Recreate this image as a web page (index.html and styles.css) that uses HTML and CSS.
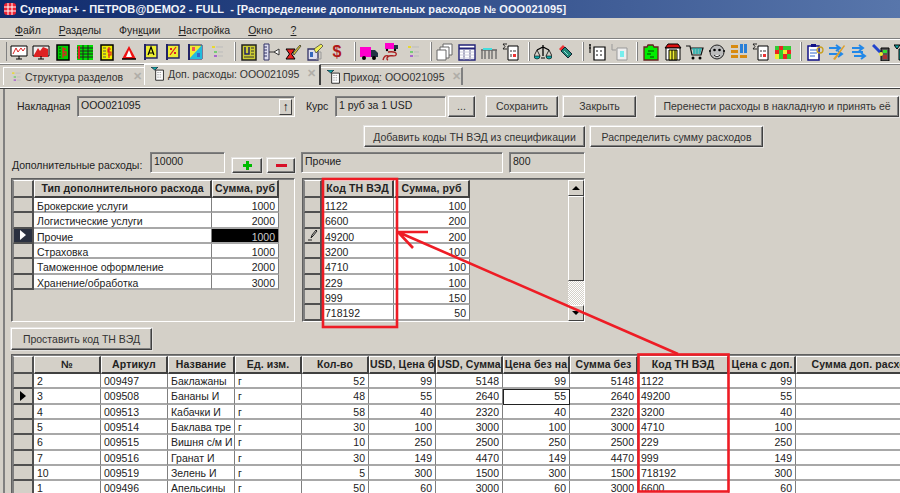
FILE: index.html
```html
<!doctype html>
<html>
    <head>
        <title>Супермаг+</title>
        <link rel="stylesheet" href="styles.css">
    </head>
    <body>
        <svg class="defs">
            <symbol id="tree" viewBox="0 0 18 18">
                <path d="M4 3h3v2H4z" fill="#e8d830"/><path d="M8 4h7" stroke="#bbb"/><path d="M6 8h3v2H6z" fill="#7c7"/><path d="M10 9h5" stroke="#bbb"/><path d="M6 12h3v2H6z" fill="#a6c"/><path d="M10 13h5" stroke="#bbb"/>
            </symbol>
            <symbol id="sumdoc" viewBox="0 0 18 18">
                <path d="M6 3h10v14H6z" fill="#fff" stroke="#000"/><path d="M5 1H1l2 2.500L1 6h4" fill="none" stroke="#000" stroke-width=".8"/><path d="M8 7h2v2H8zM11 7h3v2h-3zM8 11h2v3H8z" fill="#999"/><path d="M11 11h3v3h-3z" fill="#e33"/>
            </symbol>
        </svg>

        <div class="titlebar">
            <svg class="applogo" viewBox="0 0 14 14"><rect x="1" y="1" width="12" height="12" rx="3" fill="#e23"/><path d="M1 5h12M1 9h12M5 1v12M9 1v12" stroke="#fff"/></svg>
            <span>Супермаг+ - ПЕТРОВ@DEMO2 - FULL  - [Распределение дополнительных расходов № ООО021095]</span>
        </div>

        <div class="menubar">
            <span><u>Ф</u>айл</span>
            <span><u>Р</u>азделы</span>
            <span>Фун<u>к</u>ции</span>
            <span><u>Н</u>астройка</span>
            <span><u>О</u>кно</span>
            <span><u>?</u></span>
        </div>

        <div class="toolbar">
            <i class="grip"></i>
            <svg class="ico" viewBox="0 0 18 18"><path d="M1 3h16v10H1z" fill="#fff" stroke="#000"/><path d="M3 11l3-6 2 4 3-4 2 3 2-3" fill="none" stroke="#d22"/><path d="M9 13v3M6 16h6" stroke="#000"/></svg>
            <svg class="ico" viewBox="0 0 18 18"><path d="M1 3h16v10H1z" fill="#eee" stroke="#000"/><path d="M2 12l4-7 2 3 3-4 5 2v8H2z" fill="#d22"/><path d="M9 13v3M6 16h6" stroke="#000"/></svg>
            <svg class="ico" viewBox="0 0 18 18"><path d="M3 2h12v15H3z" fill="#0c0" stroke="#000" stroke-width="1.500"/><path d="M5 5h2M5 8h2M5 11h2M5 14h2" stroke="#040"/><path d="M9 4v11M12 6H9.500v3H12v3H9" fill="none" stroke="#d22" stroke-width="1.300"/></svg>
            <svg class="ico" viewBox="0 0 18 18"><path d="M1 2h16v15H1z" fill="#0d0"/><path d="M1 5h16M1 8h16M1 11h16M1 14h16M7 2v15M12 2v15" stroke="#222"/><path d="M3 3v13" stroke="#d22" stroke-width="2"/></svg>
            <svg class="ico" viewBox="0 0 18 18"><path d="M3 2h12v15H3z" fill="#ee0" stroke="#000" stroke-width="1.500"/><path d="M5 5h3M5 8h3M5 11h3M5 14h3" stroke="#555"/><path d="M11 4v11M13 6h-3v3h3v3h-3" fill="none" stroke="#d22" stroke-width="1.200"/></svg>
            <svg class="ico" viewBox="0 0 18 18"><path d="M9 3l7 13H2z" fill="#e11"/><path d="M9 7l3 7H6z" fill="#fff"/><path d="M2 16h14" stroke="#000" stroke-width="1.500"/></svg>
            <svg class="ico" viewBox="0 0 18 18"><path d="M3 2h12v13H3z" fill="#ee3" stroke="#226" stroke-width="1.500"/><path d="M3 1v16" stroke="#226" stroke-width="2"/><path d="M6 12l3-8 3 8M7 10h4" fill="none" stroke="#000" stroke-width="1.200"/></svg>
            <svg class="ico" viewBox="0 0 18 18"><path d="M3 2h12v13H3z" fill="#ee3" stroke="#226" stroke-width="1.500"/><path d="M3 1v16" stroke="#226" stroke-width="2"/><path d="M6 12l6-8" stroke="#d22" stroke-width="1.200"/><path d="M6 5h2v2H6zM10 9h2v2h-2z" fill="#d22"/></svg>
            <svg class="ico" viewBox="0 0 18 18"><path d="M3 2h13v14H3z" fill="#ee3" stroke="#226"/><path d="M3 16L16 2v14z" fill="#2bd"/><path d="M3 1v16" stroke="#226" stroke-width="2"/><path d="M6 4h3v4H6z" fill="#e55"/><path d="M11 10h3v4h-3z" fill="#36c"/></svg>
            <svg class="ico"><use href="#tree"/></svg>
            <i class="sep"></i>
            <svg class="ico" viewBox="0 0 18 18"><path d="M2 2h14v15H2z" fill="#cc3" stroke="#222" stroke-width="1.500"/><path d="M5 4v7h4V4" fill="none" stroke="#226" stroke-width="1.500"/><path d="M11 5h3M11 8h3M11 11h3M4 14h10" stroke="#333"/></svg>
            <svg class="ico" viewBox="0 0 18 18"><path d="M2 1h5v16H2z" fill="#dde" stroke="#336"/><path d="M2 4h3M2 7h3M2 10h3M2 13h3" stroke="#336"/><path d="M7 9h5" stroke="#333"/><path d="M12 9l5-3v6z" fill="#fff" stroke="#333"/></svg>
            <svg class="ico" viewBox="0 0 18 18"><path d="M2 6h9L7.500 11l3.500 5H2l3.500-5z" fill="#e22" stroke="#000"/><path d="M9 10l7-8 1 1-7 9z" fill="#dc3" stroke="#222" stroke-width=".7"/></svg>
            <svg class="ico" viewBox="0 0 18 18"><path d="M2 6h10v11H2z" fill="#dde" stroke="#336" stroke-width="1.300"/><path d="M4 9h3v5H4z" fill="#36b"/><path d="M8 6l7-5 2 2-7 7z" fill="#ee5" stroke="#333" stroke-width=".7"/><path d="M12 9h3v7h-5" fill="none" stroke="#999"/></svg>
            <span class="ico dollar">$</span>
            <i class="sep"></i>
            <svg class="ico" viewBox="0 0 18 18"><path d="M0 4h11v10H0z" fill="#f0c"/><path d="M11 7h4l3 3v4h-7z" fill="#234"/><circle cx="4" cy="15" r="2" fill="#000"/><circle cx="14" cy="15" r="2" fill="#000"/></svg>
            <svg class="ico" viewBox="0 0 18 18"><path d="M3 0h9v6H3z" fill="#f0c"/><path d="M12 2h4v4h-4z" fill="#234"/><circle cx="5" cy="7" r="1.200"/><circle cx="13" cy="7" r="1.200"/><path d="M6 9c7-1 9 1 8 3s-5 0-7 1-3 3-1 4M1 17c1-4 3-5 5-4" fill="none" stroke="#a22" stroke-width="1.400"/></svg>
            <svg class="ico"><use href="#tree"/></svg>
            <i class="sep"></i>
            <svg class="ico" viewBox="0 0 18 18"><path d="M7 1h9v11H7z" fill="#fff" stroke="#666"/><path d="M4 4h9v11H4z" fill="#fff" stroke="#666"/><path d="M1 7h9v10H1z" fill="#fff" stroke="#666"/></svg>
            <svg class="ico" viewBox="0 0 18 18"><path d="M1 2h16v15H1z" fill="#fff" stroke="#227" stroke-width="1.400"/><path d="M1 5.500h16" stroke="#227" stroke-width="2"/><path d="M6 7v10M12 7v10" stroke="#88a" stroke-width="1.400"/><path d="M2 9h14M2 12h14M2 15h14" stroke="#ccd"/></svg>
            <svg class="ico" viewBox="0 0 18 18"><path d="M1 7h16M2 7v9M5 7v9M9 7v9M12 7v9M16 7v9" stroke="#666" stroke-width="1.300"/><path d="M3 5h9v2H3z" fill="#4dd"/></svg>
            <svg class="ico"><use href="#sumdoc"/></svg>
            <i class="sep"></i>
            <svg class="ico" viewBox="0 0 18 18"><path d="M9 2v11M3 7l6-3 6 3" fill="none" stroke="#000" stroke-width="1.300"/><path d="M3 7l-3 6M3 7l3 6M15 7l-3 6M15 7l3 6" stroke="#000" stroke-width=".8"/><path d="M0 13h6a3 3 0 0 1-6 0zM12 13h6a3 3 0 0 1-6 0z" fill="#1aa" stroke="#000" stroke-width=".6"/><path d="M7 15h4" stroke="#000"/></svg>
            <svg class="ico" viewBox="0 0 18 18"><path d="M3 6l4-4 2 2-4 4z" fill="#e33"/><path d="M5 8l4-4 7 7-4 4z" fill="#287" stroke="#123"/><path d="M8 8l4 4" stroke="#9dd"/></svg>
            <i class="sep"></i>
            <svg class="ico" viewBox="0 0 18 18"><path d="M6 4h11v13H6z" fill="#fff" stroke="#000" stroke-width="1.200"/><path d="M8 7h2v2H8zM12 7h2v2h-2zM8 11h2v2H8zM12 11h2v2h-2z" fill="#888"/><path d="M2 1v9M1 2h2M1 5h2" stroke="#000"/></svg>
            <svg class="ico" viewBox="0 0 18 18"><path d="M7 5h10v12H7z" fill="#eee" stroke="#999"/><path d="M10 8h4v6h-4z" fill="#7ee"/><path d="M2 1v6h4" fill="none" stroke="#999"/></svg>
            <i class="sep"></i>
            <svg class="ico" viewBox="0 0 18 18"><path d="M2 4h3l1-2h5l1 2h4v13H2z" fill="#0e0" stroke="#622" stroke-width="1.300"/><path d="M6 8h6M5 11h4M8 14h4" stroke="#040"/></svg>
            <svg class="ico" viewBox="0 0 18 18"><path d="M1 5l3-4h10l3 4z" fill="#d11" stroke="#000"/><path d="M2 5h14v12H2z" fill="#fff" stroke="#000"/><path d="M5 7h8v10H5z" fill="#ee3" stroke="#000"/><path d="M8 7v10M11 7v10" stroke="#000"/></svg>
            <svg class="ico" viewBox="0 0 18 18"><path d="M0 3h4l2 9h9l2-7H5" fill="none" stroke="#111" stroke-width="1.200"/><path d="M6 6h10M7 8h8M7 10h7M8 5v6M11 5v6M14 5v6" stroke="#1aa"/><circle cx="7" cy="15" r="1.500"/><circle cx="14" cy="15" r="1.500"/></svg>
            <svg class="ico" viewBox="0 0 18 18"><circle cx="9" cy="9" r="7" fill="#bbb" stroke="#222"/><path d="M1 8h2M15 8h2" stroke="#222" stroke-width="2"/><circle cx="6.500" cy="7" r="1.300"/><circle cx="11.500" cy="7" r="1.300"/><path d="M6 12c2 2 4 2 6 0" fill="#fff" stroke="#000"/></svg>
            <svg class="ico" viewBox="0 0 18 18"><path d="M1 2h7v3H1zM1 7h7v3H1zM1 12h7v3H1zM10 12h7v3h-7z" fill="#d88a10"/><path d="M10 1h3v9h-3zM14 1h3v9h-3z" fill="#2a80d8"/></svg>
            <svg class="ico"><use href="#sumdoc"/></svg>
            <svg class="ico" viewBox="0 0 18 18"><path d="M1 3h16v13H1z" fill="#3c3"/><path d="M5 3h4v4H5zM13 7h4v4h-4zM1 7h4v4H1zM9 11h4v5H9z" fill="#e22"/><path d="M9 7h4v4H9zM1 11h4v5H1z" fill="#ee3"/></svg>
            <i class="sep"></i>
            <svg class="ico" viewBox="0 0 18 18"><path d="M2 3h11v14H2z" fill="#fff" stroke="#118" stroke-width="1.500"/><path d="M5 1h5v3H5z" fill="#118"/><path d="M4 7h7M4 10h7M4 13h5" stroke="#36c"/><circle cx="14" cy="7" r="3" fill="none" stroke="#c8a020" stroke-width="1.300"/></svg>
            <svg class="ico" viewBox="0 0 18 18"><path d="M1 5h10M1 11h12M8 2l4 3-4 3M10 8l4 3-4 3" fill="none" stroke="#2288e8" stroke-width="2"/><path d="M5 16L16 2l1 1L7 17z" fill="#dca030"/></svg>
            <svg class="ico" viewBox="0 0 18 18"><path d="M2 5h10M4 13h11M9 2l4 3-4 3M11 10l4 3-4 3M2 9h11" fill="none" stroke="#2288e8" stroke-width="2"/></svg>
            <svg class="ico" viewBox="0 0 18 18"><path d="M1 2l9 9" stroke="#24c" stroke-width="3"/><path d="M9 5h8v13H9z" fill="#555" stroke="#000"/><path d="M11 7h4v3h-4z" fill="#3d3"/><path d="M11 12h4v4h-4z" fill="#a33"/><circle cx="9" cy="11" r="2" fill="#ee3"/></svg>
            <svg class="ico" viewBox="0 0 18 18"><path d="M0 2h6L3 6zM5 6h12v11H5z" fill="#1aa" stroke="#000"/></svg>
        </div>

        <div class="tabs">
            <div class="tab tab-first">
                <svg class="tabico"><use href="#tree"/></svg>
                <span>Структура разделов</span>
                <b class="close">✕</b>
            </div>
            <div class="tab tab-active">
                <svg class="tabico" viewBox="0 0 18 18"><path d="M0 0h9L5 4z" fill="#1aa" stroke="#123"/><path d="M6 4h10v13H6z" fill="#fff" stroke="#000"/><path d="M8 7h6M8 10h6M8 13h6" stroke="#888" stroke-dasharray="2 1"/></svg>
                <span>Доп. расходы: ООО021095</span>
                <b class="close">✕</b>
            </div>
            <div class="tab tab-last">
                <svg class="tabico" viewBox="0 0 18 18"><path d="M0 0h9L5 4z" fill="#1aa" stroke="#123"/><path d="M6 4h10v13H6z" fill="#fff" stroke="#000"/><path d="M8 7h6M8 10h6M8 13h6" stroke="#888" stroke-dasharray="2 1"/></svg>
                <span>Приход: ООО021095</span>
                <b class="close">✕</b>
            </div>
        </div>

        <div class="page">
            <div class="line line-one">
                <label class="lbl-nakl">Накладная</label>
                <div class="field f-nakl">
                    <span>ООО021095</span>
                    <b class="updown">↑</b>
                </div>
                <label class="lbl-kurs">Курс</label>
                <div class="field f-kurs"><span>1 руб за 1 USD</span></div>
                <button class="btn b-dots">...</button>
                <button class="btn b-save">Сохранить</button>
                <button class="btn b-close">Закрыть</button>
                <button class="btn b-move">Перенести расходы в накладную и принять её</button>
            </div>

            <div class="line line-two">
                <button class="btn b-add">Добавить коды ТН ВЭД из спецификации</button>
                <button class="btn b-split">Распределить сумму расходов</button>
            </div>

            <div class="line line-three">
                <label class="lbl-extra">Дополнительные расходы:</label>
                <div class="field f-extra"><span>10000</span></div>
                <button class="btn b-plus"><i class="plus"></i></button>
                <button class="btn b-minus"><i class="minus"></i></button>
                <div class="field f-name"><span>Прочие</span></div>
                <div class="field f-sum"><span>800</span></div>
            </div>

            <div class="grids">
                <div class="grid grid-types">
                    <div class="row head">
                        <i class="ind"></i><span>Тип дополнительного расхода</span><span>Сумма, руб</span>
                    </div>
                    <div class="row"><i class="ind"></i><span>Брокерские услуги</span><span class="num">1000</span></div>
                    <div class="row"><i class="ind"></i><span>Логистические услуги</span><span class="num">2000</span></div>
                    <div class="row"><i class="ind ind-dark"><b class="arrow arrow-white"></b></i><span>Прочие</span><span class="num selected">1000</span></div>
                    <div class="row"><i class="ind"></i><span>Страховка</span><span class="num">1000</span></div>
                    <div class="row"><i class="ind"></i><span>Таможенное оформление</span><span class="num">2000</span></div>
                    <div class="row"><i class="ind"></i><span>Хранение/обработка</span><span class="num">3000</span></div>
                </div>

                <div class="grid grid-codes">
                    <div class="row head">
                        <i class="ind"></i><span>Код ТН ВЭД</span><span>Сумма, руб</span>
                    </div>
                    <div class="row"><i class="ind"></i><span>1122</span><span class="num">100</span></div>
                    <div class="row"><i class="ind"></i><span>6600</span><span class="num">200</span></div>
                    <div class="row"><i class="ind"><svg class="pencil" viewBox="0 0 12 12"><path d="M1 11h4M4 9l1-3 4-5 1 1-4 5z" fill="none" stroke="#222"/></svg></i><span>49200</span><span class="num">200</span></div>
                    <div class="row"><i class="ind"></i><span>3200</span><span class="num">100</span></div>
                    <div class="row"><i class="ind"></i><span>4710</span><span class="num">100</span></div>
                    <div class="row"><i class="ind"></i><span>229</span><span class="num">100</span></div>
                    <div class="row"><i class="ind"></i><span>999</span><span class="num">150</span></div>
                    <div class="row"><i class="ind"></i><span>718192</span><span class="num">50</span></div>
                    <div class="scrollbar">
                        <b class="sb-btn"><i class="tri-up"></i></b>
                        <b class="sb-thumb"></b>
                        <b class="sb-track"></b>
                        <b class="sb-btn"><i class="tri-down"></i></b>
                    </div>
                </div>
            </div>

            <button class="btn b-stamp">Проставить код ТН ВЭД</button>

            <div class="grid grid-items">
                <div class="row head">
                    <i class="ind"></i><span>№</span><span>Артикул</span><span>Название</span><span>Ед. изм.</span><span>Кол-во</span><span>USD, Цена б</span><span>USD, Сумма</span><span>Цена без на</span><span>Сумма без</span><span>Код ТН ВЭД</span><span>Цена с доп.</span><span>Сумма доп. расходов</span>
                </div>
                <div class="row"><i class="ind"></i><span>2</span><span>009497</span><span>Баклажаны</span><span>г</span><span class="num">52</span><span class="num">99</span><span class="num">5148</span><span class="num">99</span><span class="num">5148</span><span>1122</span><span class="num">99</span><span></span></div>
                <div class="row"><i class="ind"><b class="arrow"></b></i><span>3</span><span>009508</span><span>Бананы И</span><span>г</span><span class="num">48</span><span class="num">55</span><span class="num">2640</span><span class="num focus">55</span><span class="num">2640</span><span>49200</span><span class="num">55</span><span></span></div>
                <div class="row"><i class="ind"></i><span>4</span><span>009513</span><span>Кабачки И</span><span>г</span><span class="num">58</span><span class="num">40</span><span class="num">2320</span><span class="num">40</span><span class="num">2320</span><span>3200</span><span class="num">40</span><span></span></div>
                <div class="row"><i class="ind"></i><span>5</span><span>009514</span><span>Баклава тре</span><span>г</span><span class="num">30</span><span class="num">100</span><span class="num">3000</span><span class="num">100</span><span class="num">3000</span><span>4710</span><span class="num">100</span><span></span></div>
                <div class="row"><i class="ind"></i><span>6</span><span>009515</span><span>Вишня с/м И</span><span>г</span><span class="num">10</span><span class="num">250</span><span class="num">2500</span><span class="num">250</span><span class="num">2500</span><span>229</span><span class="num">250</span><span></span></div>
                <div class="row"><i class="ind"></i><span>7</span><span>009516</span><span>Гранат И</span><span>г</span><span class="num">30</span><span class="num">149</span><span class="num">4470</span><span class="num">149</span><span class="num">4470</span><span>999</span><span class="num">149</span><span></span></div>
                <div class="row"><i class="ind"></i><span>10</span><span>009519</span><span>Зелень И</span><span>г</span><span class="num">5</span><span class="num">300</span><span class="num">1500</span><span class="num">300</span><span class="num">1500</span><span>718192</span><span class="num">300</span><span></span></div>
                <div class="row"><i class="ind"></i><span>1</span><span>009496</span><span>Апельсины</span><span>г</span><span class="num">50</span><span class="num">60</span><span class="num">3000</span><span class="num">60</span><span class="num">3000</span><span>6600</span><span class="num">60</span><span></span></div>
            </div>
        </div>

        <svg class="marks" viewBox="0 0 900 493">
            <rect x="323" y="179" width="74" height="148"/>
            <rect x="638.500" y="354.500" width="90" height="137"/>
            <path d="M678 354L398 232M398 232H428M398 232L413 248"/>
        </svg>
    </body>
</html>
```

FILE: styles.css
```css
* {
    box-sizing: border-box;
}

html,
body {
    margin: 0;
    padding: 0;
    width: 900px;
    height: 493px;
    overflow: hidden;
}

body {
    position: relative;
    display: flex;
    flex-direction: column;
    background: #d4d0c8;
    color: #222;
    font-family: "Liberation Sans", Arial, sans-serif;
    font-size: 10.5px;
}

.defs {
    display: none;
}

/* window chrome */
.titlebar {
    height: 18px;
    display: flex;
    align-items: center;
    padding-left: 3px;
    gap: 3px;
    background: linear-gradient(90deg, #0f2a6c, #5876ab);
    color: #f2f4fa;
    font-weight: bold;
    font-size: 11px;
    letter-spacing: 0.08px;
    white-space: pre;
}

.applogo {
    width: 14px;
    height: 14px;
}

.menubar {
    height: 21px;
    display: flex;
    align-items: center;
    gap: 18px;
    padding: 3px 0 0 15px;
}

.menubar span {
    white-space: nowrap;
}

.toolbar {
    height: 25px;
    display: flex;
    align-items: center;
    overflow: hidden;
    padding-left: 6px;
    border-top: 1px solid #fff;
    border-bottom: 1px solid #fff;
    box-shadow: 0 -1px #808080, 0 1px #808080;
}

.grip {
    width: 2px;
    height: 19px;
    margin-right: 1px;
    background: #fff;
    border-right: 1px solid #808080;
}

.sep {
    flex: none;
    width: 2px;
    height: 19px;
    margin: 0 2px 0 6px;
    background: #fff;
    border-right: 1px solid #808080;
}

.ico {
    flex: none;
    width: 18px;
    height: 18px;
    margin: 0 2px;
}

.dollar {
    color: #b01818;
    font-size: 16px;
    font-weight: bold;
    line-height: 18px;
    text-align: center;
}

/* tabs */
.tabs {
    height: 24px;
    display: flex;
    align-items: flex-end;
    padding: 0 0 2px 3px;
    border-bottom: 1px solid #fff;
    box-shadow: 0 1px #404040;
    position: relative;
}

.tab {
    display: flex;
    align-items: center;
    height: 18px;
    color: #333;
    white-space: nowrap;
    border-top: 1px solid #fff;
}

.tab-first {
    width: 141px;
    padding-left: 5px;
    gap: 2px;
    border-left: 1px solid #fff;
}

.tab-active {
    width: 177px;
    height: 21px;
    padding: 0 0 3px 6px;
    gap: 3px;
    background: #d8d5cd;
    border-left: 1px solid #fff;
    border-right: 2px solid #404040;
}

.tab-last {
    width: 142px;
    padding-left: 6px;
    gap: 2px;
    border-right: 2px solid #808080;
}

.tabico {
    flex: none;
    width: 14px;
    height: 14px;
}

.close {
    margin-left: 5px;
    color: #b0aea8;
    font-size: 11px;
}

.tab-first .close {
    margin-left: 8px;
}

/* form */
.page {
    flex: 1;
    min-height: 0;
    padding: 7px 0 0 6px;
    margin-left: 3px;
    border-left: 2px solid #808080;
    display: flex;
    flex-direction: column;
}

.line {
    display: flex;
    flex: none;
}

.line label {
    white-space: nowrap;
}

.line-one {
    height: 22px;
    align-items: center;
}

.line-two {
    height: 21px;
    margin-top: 9px;
    padding-left: 353px;
    gap: 5px;
}

.line-three {
    height: 21px;
    margin-top: 5px;
}

.lbl-nakl {
    width: 60px;
    margin-left: 6px;
}

.lbl-kurs {
    width: 29px;
    margin-left: 11px;
}

.lbl-extra {
    width: 139px;
    padding: 7px 0 0 1px;
}

.field {
    display: flex;
    justify-content: space-between;
    height: 21px;
    padding: 2px 3px;
    border: 1px solid;
    border-color: #808080 #fff #fff #808080;
    box-shadow: inset 1px 1px #707070;
}

.f-nakl {
    width: 218px;
}

.f-kurs {
    width: 111px;
}

.f-extra {
    width: 75px;
}

.f-name {
    width: 202px;
    margin-left: 6px;
}

.f-sum {
    width: 76px;
    margin-left: 6px;
}

.updown {
    width: 13px;
    height: 16px;
    margin-right: -1px;
    text-align: center;
    line-height: 14px;
    color: #000;
    font-size: 12px;
    font-weight: bold;
    border: 1px solid;
    border-color: #fff #404040 #404040 #fff;
}

.btn {
    display: block;
    padding: 0;
    height: 21px;
    font: inherit;
    color: #333;
    background: #d4d0c8;
    white-space: nowrap;
    border: 1px solid;
    border-color: #fff #404040 #404040 #fff;
    box-shadow: inset -1px -1px #808080;
    outline: 1px solid #eee9;
}

.b-dots {
    width: 27px;
    margin-left: 2px;
}

.b-save {
    width: 72px;
    margin-left: 11px;
}

.b-close {
    width: 73px;
    margin-left: 5px;
}

.b-move {
    width: 244px;
    margin-left: 19px;
}

.b-add {
    width: 221px;
}

.b-split {
    width: 173px;
}

.b-plus {
    width: 30px;
    height: 15px;
    margin: 6px 0 0 7px;
}

.b-minus {
    width: 28px;
    height: 15px;
    margin: 6px 0 0 5px;
}

.plus,
.minus {
    display: block;
    margin: auto;
}

.plus {
    width: 9px;
    height: 9px;
    background:
        linear-gradient(#0b0, #0b0) center / 9px 3px no-repeat,
        linear-gradient(#0b0, #0b0) center / 3px 9px no-repeat;
}

.minus {
    width: 11px;
    height: 3px;
    background: #d81028;
}

.b-stamp {
    flex: none;
    width: 141px;
    height: 22px;
    margin-top: 6px;
}

/* data grids */
.grids {
    flex: none;
    display: flex;
    gap: 7px;
    margin-top: 5px;
}

.grid {
    position: relative;
    border: 1px solid;
    border-color: #606060 #fff #fff #606060;
    box-shadow: inset 1px 1px #808080;
    padding: 1px 0 0 1px;
    overflow: hidden;
}

.grid-types {
    width: 284px;
    height: 144px;
}

.grid-codes {
    width: 283px;
    height: 144px;
}

.grid-items {
    flex: 1;
    min-height: 0;
    width: 889px;
    margin-top: 4px;
    border-right: 0;
    border-bottom: 0;
}

.row {
    display: grid;
    height: 15.33px;
}

.grid-types .row {
    grid-template-columns: 21px 178px 67px;
}

.grid-codes .row {
    grid-template-columns: 18px 72px 76px;
}

.grid-items .row {
    grid-template-columns: 21px 67px 67px 67px 67px 67px 67px 67px 67px 68px 91px 67px 146px;
    width: 950px;
}

.row span {
    display: block;
    padding: 1px 3px 0;
    background: #fff;
    white-space: nowrap;
    overflow: hidden;
    line-height: 13px;
    border-right: 1px solid #808080;
    border-bottom: 2px solid #a8a8a8;
}

.grid-types .row span,
.grid-codes .row span {
    height: 15.33px;
    padding-top: 2px;
    overflow: visible;
}

.row .num {
    text-align: right;
}

.row .selected {
    background: #000;
    color: #ccc;
}

.row .focus {
    border: 1px solid #222;
    box-shadow: 1px 1px #555;
    padding-top: 0;
}

.ind {
    display: flex;
    align-items: center;
    justify-content: center;
    border-right: 2px solid #505050;
    border-bottom: 2px solid #505050;
    border-left: 1px solid #808080;
}

.ind-dark {
    background: #2a3040;
}

.arrow {
    width: 0;
    height: 0;
    border-left: 6px solid #000;
    border-top: 5px solid transparent;
    border-bottom: 5px solid transparent;
}

.arrow-white {
    border-left-color: #fff;
}

.pencil {
    width: 12px;
    height: 12px;
}

.row.head {
    height: 18px;
    font-weight: bold;
    letter-spacing: 0.1px;
}

.grid .row.head span {
    height: 18px;
    padding: 1px 0 0;
    text-align: center;
    background: #d4d0c8;
    color: #222;
    overflow: hidden;
    border-top: 1px solid #fff;
    border-left: 1px solid #fff;
    border-right: 2px solid #404040;
    border-bottom: 2px solid #404040;
}

.row.head .ind {
    border-top: 1px solid #fff;
}

.scrollbar {
    position: absolute;
    top: 1px;
    right: 0;
    bottom: 0;
    width: 16px;
    display: flex;
    flex-direction: column;
}

.sb-btn,
.sb-thumb {
    display: flex;
    align-items: center;
    justify-content: center;
    background: #d4d0c8;
    border: 1px solid;
    border-color: #fff #404040 #404040 #fff;
}

.sb-btn {
    height: 16px;
    flex: none;
}

.sb-thumb {
    height: 85px;
    flex: none;
}

.sb-track {
    flex: 1;
    background: repeating-conic-gradient(#fff 0 25%, #d4d0c8 0 50%) 0 0 / 2px 2px;
}

.tri-up,
.tri-down {
    width: 0;
    height: 0;
    border-left: 4px solid transparent;
    border-right: 4px solid transparent;
}

.tri-up {
    border-bottom: 4px solid #000;
}

.tri-down {
    border-top: 4px solid #000;
}

/* the red pen marks on top of the shot */
.marks {
    position: absolute;
    top: 0;
    left: 0;
    width: 900px;
    height: 493px;
    pointer-events: none;
    fill: none;
    stroke: #ee1c25;
    stroke-width: 2.6;
}
```
